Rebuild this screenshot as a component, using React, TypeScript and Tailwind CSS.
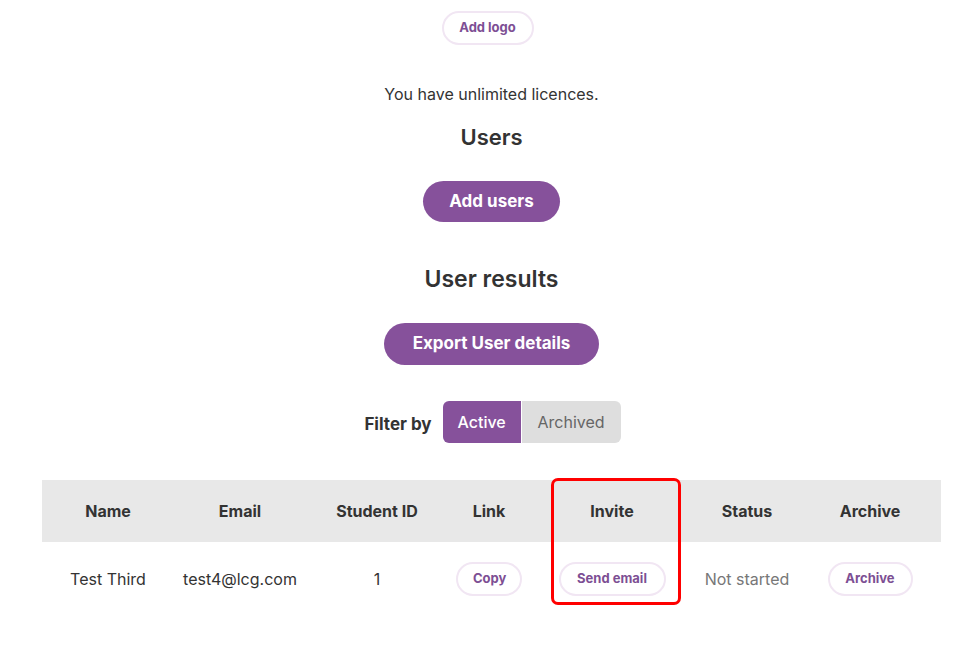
const columns = [
  { label: 'Name', width: 'w-[132px]' },
  { label: 'Email', width: 'w-[132px]' },
  { label: 'Student ID', width: 'w-[142px]' },
  { label: 'Link', width: 'w-[82px]' },
  { label: 'Invite', width: 'w-[164px]' },
  { label: 'Status', width: 'w-[106px]' },
  { label: 'Archive', width: 'w-[140px]' },
];

function PillButton({ children, className = '' }: { children: React.ReactNode; className?: string }) {
  return (
    <button
      className={`h-[34px] rounded-full border-2 border-[#f1e6f3] bg-white px-[15px] text-[13px] font-bold text-[#7d4f94] ${className}`}
    >
      {children}
    </button>
  );
}

function PrimaryButton({ children, className = '' }: { children: React.ReactNode; className?: string }) {
  return (
    <button
      className={`rounded-full bg-[#86519b] text-[17px] font-bold text-white ${className}`}
    >
      {children}
    </button>
  );
}

export default function App() {
  return (
    <div
      className="min-h-[670px] w-[975px] bg-white text-[#333]"
      style={{ fontFamily: 'Inter, "Noto Sans", sans-serif' }}
    >
      <div className="flex flex-col items-center pl-[8px]">
        {/* Logo */}
        <PillButton className="mr-[8px] mt-[11px] w-[92px] px-0">Add logo</PillButton>

        <p className="mt-[37px] text-[16px] leading-[24px]">You have unlimited licences.</p>

        {/* Users */}
        <h2 className="mt-[16px] text-[22px] font-semibold leading-[30px]">Users</h2>
        <PrimaryButton className="mt-[29px] h-[41px] w-[137px]">Add users</PrimaryButton>

        {/* Results */}
        <h2 className="mt-[42px] text-[23px] font-semibold leading-[30px]">User results</h2>
        <PrimaryButton className="mt-[29px] h-[42px] w-[215px]">Export User details</PrimaryButton>

        {/* Filter */}
        <div className="ml-[2px] mt-[36px] flex items-center">
          <span className="mr-[11px] mt-[6px] text-[17px] font-bold">Filter by</span>
          <div className="flex h-[42px] overflow-hidden rounded-[6px]">
            <button className="w-[78px] bg-[#86519b] text-[16px] font-medium text-white">Active</button>
            <button className="ml-[1px] w-[99px] bg-[#dedede] text-[16px] text-[#666]">Archived</button>
          </div>
        </div>
      </div>

      {/* Table */}
      <div className="relative ml-[42px] mt-[37px] w-[899px]">
        <div className="flex h-[62px] items-center bg-[#e8e8e8]">
          {columns.map((c) => (
            <div key={c.label} className={`${c.width} text-center text-[16px] font-bold`}>
              {c.label}
            </div>
          ))}
        </div>
        <div className="flex h-[70px] items-center pt-[4px] text-[16px]">
          <div className="w-[132px] text-center">Test Third</div>
          <div className="w-[132px] text-center">test4@lcg.com</div>
          <div className="w-[142px] text-center">1</div>
          <div className="flex w-[82px] justify-center">
            <PillButton className="w-[66px] px-0">Copy</PillButton>
          </div>
          <div className="flex w-[164px] justify-center">
            <PillButton className="w-[107px] px-0">Send email</PillButton>
          </div>
          <div className="w-[106px] text-center text-[#777]">Not started</div>
          <div className="flex w-[140px] justify-center">
            <PillButton className="w-[85px] px-0">Archive</PillButton>
          </div>
        </div>

        {/* annotation highlight */}
        <div className="pointer-events-none absolute left-[509px] top-[-2px] h-[127px] w-[130px] rounded-[7px] border-[3px] border-[#f00]" />
      </div>
    </div>
  );
}
